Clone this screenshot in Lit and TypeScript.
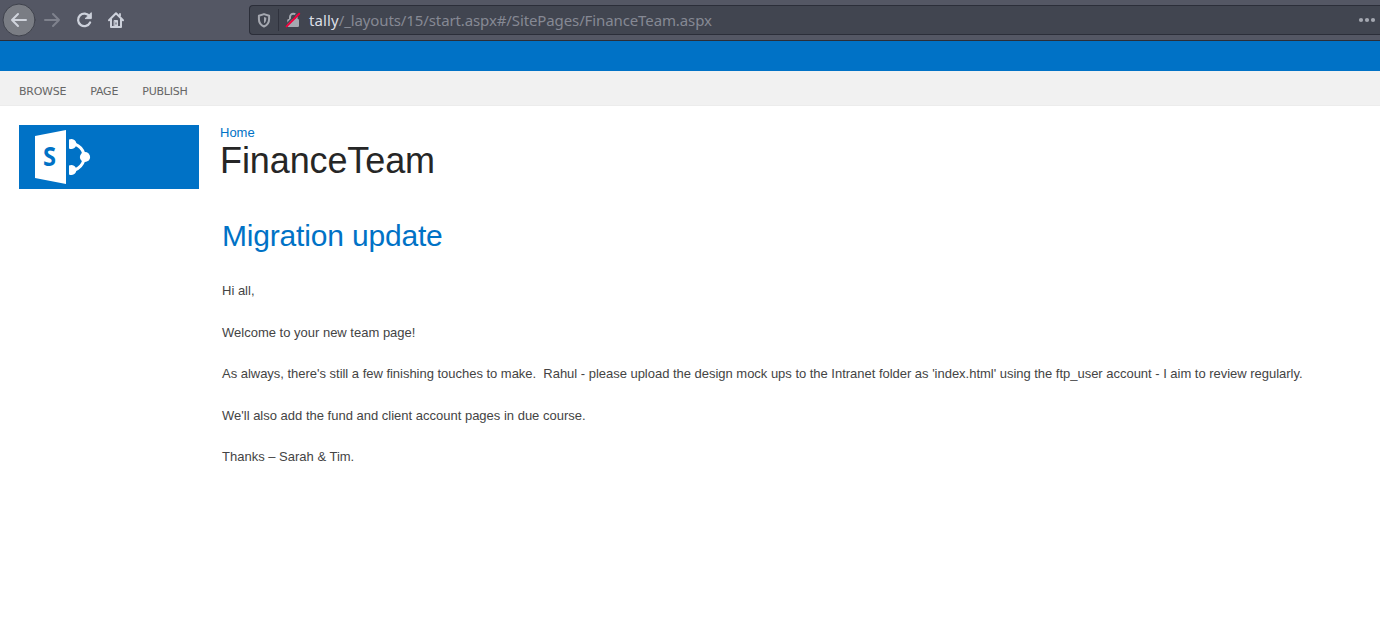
import { LitElement, html, css } from "lit";
import { customElement } from "lit/decorators.js";

@customElement("browser-bar")
class BrowserBar extends LitElement {
  static styles = css`
    :host { display: flex; box-sizing: border-box; height: 41px; background: #545764; border-bottom: 1px solid #2b2e38; overflow: hidden; }
    .nav { flex: none; width: 249px; height: 40px; display: block; }
    .field { flex: 1; box-sizing: border-box; height: 30px; margin-top: 5px; display: flex; align-items: center; background: #414550; border: 1px solid #2b2e39; border-right: 0; border-radius: 4px 0 0 4px; }
    .badges { flex: none; width: 59px; height: 28px; }
    .url { flex: 1; font: 15px/28px "Noto Sans", sans-serif; color: #868994; white-space: pre; letter-spacing: -0.11px; }
    .host { color: #dcdfe6; letter-spacing: 0.1px; }
    .dots { flex: none; width: 24px; height: 28px; }
  `;
  render() {
    return html`
      <svg class="nav" viewBox="0 0 249 40" fill="none" stroke-width="2" stroke-linecap="round" stroke-linejoin="round">
        <circle cx="19" cy="20" r="16" fill="#7a7d84" stroke="#3f424c" stroke-width="1" />
        <path d="M26 20H12M18 14l-6 6 6 6" stroke="#d0d4dc" />
        <path d="M45 20h14M53 14l6 6-6 6" stroke="#7f828d" />
        <path d="M89.6 16.3A6.3 6.3 0 1 0 90.1 22.5" stroke="#cdd1db" stroke-width="2.2" />
        <path d="M91.3 13v5.6h-5.8Z" fill="#cdd1db" stroke="#cdd1db" stroke-width="1" />
        <path d="M109 20.3l7-7 7 7M111 19v8h10v-8" stroke="#cdd1db" />
        <path d="M114.5 20.5h3v6h-3z" fill="#cdd1db" stroke="#cdd1db" stroke-width="1" />
        <path d="M116 22.5v2" stroke="#545764" stroke-width="1" stroke-linecap="butt" />
        <path d="M120 13.3v3" stroke="#cdd1db" stroke-width="1.8" stroke-linecap="butt" />
      </svg>
      <div class="field">
        <svg class="badges" viewBox="1 0 59 28" fill="none">
          <path d="M15 8.1 9.9 9.7v3.2c0 3.7 1.5 6.1 5.1 7.6 3.6-1.5 5.1-3.9 5.1-7.6V9.7Z" stroke="#a5a8b0" stroke-width="2" stroke-linejoin="round" />
          <path d="M15 11v6.3c-1.8-1-2.3-2.3-2.3-5.5Z" fill="#a5a8b0" transform="matrix(-1 0 0 1 30 0)" />
          <path d="M29.5 3v22" stroke="#2f323d" />
          <path d="M41 14v-3a3.3 3.3 0 0 1 6.6 0v3" stroke="#a5a8b0" stroke-width="2" />
          <rect x="38.3" y="13" width="11.7" height="8" rx="1.2" fill="#a5a8b0" />
          <path d="M36.4 19.2 49 6.6" stroke="#414550" stroke-width="1.4" />
          <path d="M37.6 20.4 50.2 7.8" stroke="#f0003c" stroke-width="2" stroke-linecap="round" />
        </svg>
        <div class="url"><span class="host">tally</span><span class="path">/_layouts/15/start.aspx#/SitePages/FinanceTeam.aspx</span></div>
        <svg class="dots" viewBox="0 0 24 28" fill="#a5a8b1">
          <circle cx="5" cy="14" r="2.1" /><circle cx="11" cy="14" r="2.1" /><circle cx="17" cy="14" r="2.1" />
        </svg>
      </div>
    `;
  }
}

@customElement("site-logo")
class SiteLogo extends LitElement {
  static styles = css`
    :host { display: block; flex: none; width: 180px; height: 64px; background: #0072c6; }
    svg { display: block; }
    .letter { font: bold 27px "Open Sans", sans-serif; }
  `;
  render() {
    return html`
      <svg width="180" height="64" viewBox="0 0 180 64" fill="#fff">
        <path d="M16 11 47 5v54l-31-6Z" />
        <text class="letter" x="24" y="41.4" textLength="13" lengthAdjust="spacingAndGlyphs" fill="#0072c6">S</text>
        <path d="M50 14.6a5 5 0 1 1 0 8.8ZM50 40.6a5 5 0 1 1 0 8.8Z" />
        <circle cx="66" cy="32" r="5.1" />
        <path d="M56 19.2q6.6 2.6 8.8 9.3M56 44.8q6.6-2.6 8.8-9.3" fill="none" stroke="#fff" stroke-width="3" />
      </svg>
    `;
  }
}

@customElement("app-root")
class AppRoot extends LitElement {
  static styles = css`
    :host { display: block; height: 633px; overflow: hidden; background: #fff; font-family: "Liberation Sans", sans-serif; }
    .suite { height: 30px; background: #0072c6; }
    .ribbon { box-sizing: border-box; height: 35px; padding-left: 19px; display: flex; gap: 24.2px; background: #f1f1f1; border-bottom: 1px solid #ececec; font: 11px/41px "DejaVu Sans", sans-serif; letter-spacing: -0.25px; color: #666; }
    .main { display: flex; gap: 21px; padding: 19px 0 0 19px; }
    .content { flex: 1; }
    .crumb { font-size: 13px; line-height: 15px; color: #0072c6; }
    h1 { margin: 0; font-size: 36px; line-height: 42px; font-weight: 400; letter-spacing: -0.1px; color: #262626; }
    .article { padding: 35px 0 0 2px; font-size: 13px; line-height: 21px; color: #444; }
    h2 { margin: 0 0 25px; font-size: 30px; line-height: 38px; font-weight: 400; letter-spacing: -0.18px; color: #0072c6; }
    p { margin: 0 0 20.5px; white-space: pre; }
    .long { letter-spacing: -0.021px; }
  `;
  render() {
    return html`
      <browser-bar></browser-bar>
      <div class="suite"></div>
      <nav class="ribbon"><span>BROWSE</span><span>PAGE</span><span>PUBLISH</span></nav>
      <main class="main">
        <site-logo></site-logo>
        <div class="content">
          <div class="crumb">Home</div>
          <h1>FinanceTeam</h1>
          <article class="article">
            <h2>Migration update</h2>
            <p>Hi all,</p>
            <p>Welcome to your new team page!</p>
            <p class="long">As always, there's still a few finishing touches to make.  Rahul - please upload the design mock ups to the Intranet folder as 'index.html' using the ftp_user account - I aim to review regularly.</p>
            <p>We'll also add the fund and client account pages in due course.</p>
            <p>Thanks – Sarah &amp; Tim.</p>
          </article>
        </div>
      </main>
    `;
  }
}
